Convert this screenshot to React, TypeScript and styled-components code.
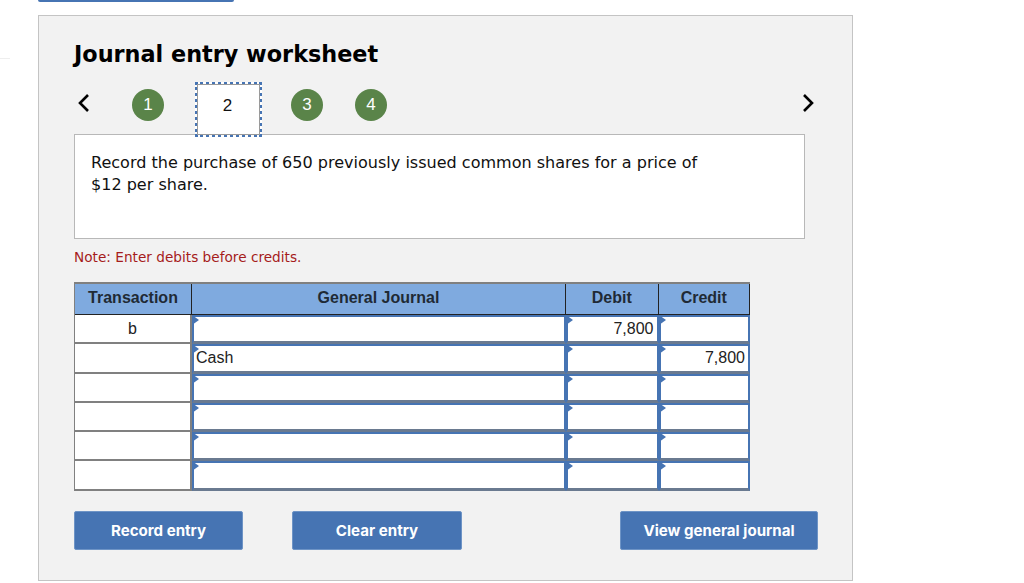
import React from "react";
import styled, { createGlobalStyle } from "styled-components";

const Global = createGlobalStyle`
  html, body { margin: 0; padding: 0; background: #fff; }
  body { position: relative; width: 1024px; height: 583px; overflow: hidden; font-family: "Liberation Sans", Arial, sans-serif; }
`;

const TopStub = styled.div`
  width: 196px; height: 2px; margin-left: 38px; margin-bottom: 13px;
  background: #4674b3; border-radius: 0 0 3px 3px;
`;

const FaintRule = styled.i`
  position: absolute; left: 0; top: 58px; width: 10px; height: 1px; background: #eeeeee;
`;

const Panel = styled.section`
  box-sizing: border-box; width: 815px; height: 566px; margin-left: 38px;
  padding: 20px 35px 0 35px; background: #f2f2f2; border: 1px solid #c4c4c4;
`;

const Title = styled.h1`
  margin: 0; height: 46px; font: bold 22.35px/36px "DejaVu Sans", Verdana, sans-serif; color: #000;
`;

const Steps = styled.nav`
  display: flex; align-items: flex-start; height: 52px; position: relative; z-index: 1;
`;

const Chevron = styled.svg<{ $end?: boolean }>`
  width: 14px; height: 20px; margin-top: 11px; margin-left: ${(p) => (p.$end ? "auto" : "3px")};
  margin-right: ${(p) => (p.$end ? "2px" : "0")}; fill: none; stroke: #000; stroke-width: 2.6;
`;

const Circle = styled.span<{ $gap: number }>`
  width: 32px; height: 32px; margin: 7px 0 0 ${(p) => p.$gap}px; border-radius: 50%;
  display: flex; align-items: center; justify-content: center;
  background: #5a8449; color: #fff; font: 17px "Liberation Sans", Arial, sans-serif;
`;

const CurrentStep = styled.span`
  box-sizing: border-box; width: 67px; height: 55px; margin-left: 31px;
  display: flex; align-items: center; justify-content: center; padding: 0 2px 8px 0;
  background: #fff; border: 3px dotted #4674b3; outline: 1px solid #9a9a9a; outline-offset: -3px;
  color: #111; font: 17px "Liberation Sans", Arial, sans-serif;
`;

const Prompt = styled.div`
  box-sizing: border-box; width: 731px; height: 105px; padding: 17px 16px 0;
  background: #fff; border: 1px solid #b8b8b8; color: #111;
  font: 16.05px/22px "DejaVu Sans", Verdana, sans-serif;
`;

const Note = styled.p`
  margin: 9px 0 0; height: 34px; color: #a61c1c; font: 13.66px/18px "DejaVu Sans", Verdana, sans-serif;
`;

const Grid = styled.div`
  display: grid; width: 676px; box-sizing: border-box;
  grid-template-columns: 117px 374px 92.5px 91.5px;
  grid-template-rows: 31px repeat(6, 29.3px);
  border-top: 2px solid #808080; border-left: 1px solid #808080;
`;

const Head = styled.div`
  display: flex; align-items: center; justify-content: center; box-sizing: border-box; padding-bottom: 2px;
  background: #7faadf; color: #1f2a35; font: bold 16px "Liberation Sans", Arial, sans-serif;
  border-right: 1px solid #222; border-bottom: 1px solid #222;
`;

const TxCell = styled.div`
  display: flex; align-items: center; justify-content: center; box-sizing: border-box;
  background: #fff; color: #222; font: 16px "Liberation Sans", Arial, sans-serif;
  border-right: 2px solid #808080; border-bottom: 2px solid #808080;
`;

const EntryCell = styled.div<{ $align?: string }>`
  position: relative; display: flex; align-items: center; box-sizing: border-box;
  justify-content: ${(p) => p.$align ?? "flex-start"};
  padding: 0 3px 0 2px; background: #fff; color: #222; font: 16px "Liberation Sans", Arial, sans-serif;
  border: 2px solid #4674b3; border-bottom-color: #6a7a90; border-bottom-width: 3px;
  &::before {
    content: ""; position: absolute; left: -2px; top: -2px;
    border-left: 7px solid #4674b3; border-top: 5px solid transparent; border-bottom: 5px solid transparent;
  }
`;

const Actions = styled.div`
  display: flex; margin-top: 20px; width: 744px;
`;

const Action = styled.button<{ $w: number; $ml: number }>`
  width: ${(p) => p.$w}px; height: 39px; margin-left: ${(p) => p.$ml}px; padding: 0;
  background: #4674b3; color: #fff; border: 1px solid #6e94c6; border-radius: 2px;
  font: bold 15.1px "Inter", "Open Sans", sans-serif;
`;

const rows = [
  ["b", "", "7,800", ""],
  ["", "Cash", "", "7,800"],
  ["", "", "", ""],
  ["", "", "", ""],
  ["", "", "", ""],
  ["", "", "", ""],
];

export default function App() {
  return (
    <>
      <Global />
      <FaintRule />
      <TopStub />
      <Panel>
        <Title>Journal entry worksheet</Title>
        <Steps>
          <Chevron viewBox="0 0 14 20"><path d="M11 2 L3 10 L11 18" /></Chevron>
          <Circle $gap={41}>1</Circle>
          <CurrentStep>2</CurrentStep>
          <Circle $gap={29}>3</Circle>
          <Circle $gap={32}>4</Circle>
          <Chevron $end viewBox="0 0 14 20"><path d="M3 2 L11 10 L3 18" /></Chevron>
        </Steps>
        <Prompt>
          Record the purchase of 650 previously issued common shares for a price of
          <br />
          $12 per share.
        </Prompt>
        <Note>Note: Enter debits before credits.</Note>
        <Grid>
          <Head>Transaction</Head>
          <Head>General Journal</Head>
          <Head>Debit</Head>
          <Head>Credit</Head>
          {rows.map((r, i) => (
            <React.Fragment key={i}>
              <TxCell>{r[0]}</TxCell>
              <EntryCell>{r[1]}</EntryCell>
              <EntryCell $align="flex-end">{r[2]}</EntryCell>
              <EntryCell $align="flex-end">{r[3]}</EntryCell>
            </React.Fragment>
          ))}
        </Grid>
        <Actions>
          <Action $w={169} $ml={0}>Record entry</Action>
          <Action $w={170} $ml={49}>Clear entry</Action>
          <Action $w={198} $ml={158}>View general journal</Action>
        </Actions>
      </Panel>
    </>
  );
}
